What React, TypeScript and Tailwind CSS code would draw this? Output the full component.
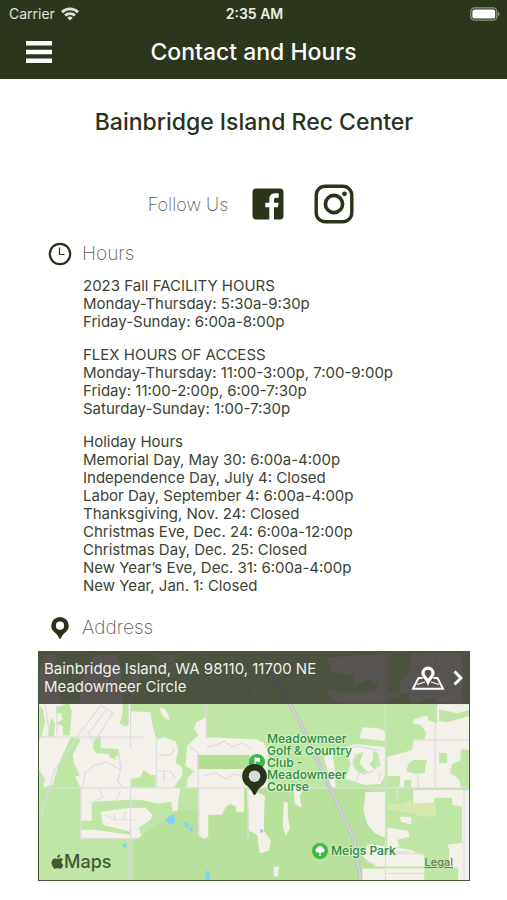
import React from 'react';

const schedule = [
    {
        title: '2023 Fall FACILITY HOURS',
        lines: ['Monday-Thursday: 5:30a-9:30p', 'Friday-Sunday: 6:00a-8:00p'],
    },
    {
        title: 'FLEX HOURS OF ACCESS',
        lines: [
            'Monday-Thursday: 11:00-3:00p, 7:00-9:00p',
            'Friday: 11:00-2:00p, 6:00-7:30p',
            'Saturday-Sunday: 1:00-7:30p',
        ],
    },
    {
        title: 'Holiday Hours',
        lines: [
            'Memorial Day, May 30: 6:00a-4:00p',
            'Independence Day, July 4: Closed',
            'Labor Day, September 4: 6:00a-4:00p',
            'Thanksgiving, Nov. 24: Closed',
            'Christmas Eve, Dec. 24: 6:00a-12:00p',
            'Christmas Day, Dec. 25: Closed',
            'New Year’s Eve, Dec. 31: 6:00a-4:00p',
            'New Year, Jan. 1: Closed',
        ],
    },
];

const WifiIcon = () => (
    <svg viewBox="0 0 18 14" className="h-[14px] w-[18px]" fill="none" stroke="currentColor" strokeWidth="2.8">
        <path d="M1 5.2a11.4 11.4 0 0 1 16 0" />
        <path d="M4 8.6a7.2 7.2 0 0 1 10 0" />
        <path d="M9 13.6 6.2 10.8a4 4 0 0 1 5.6 0Z" fill="currentColor" stroke="none" />
    </svg>
);

const BatteryIcon = () => (
    <svg viewBox="0 0 30 14" className="h-[14px] w-[30px]">
        <rect x="0.8" y="0.8" width="26" height="12.4" rx="3.6" fill="none" stroke="#8d9385" strokeWidth="1.3" />
        <rect x="2.4" y="2.4" width="22.8" height="9.2" rx="2.2" fill="#fff" />
        <path d="M28 4.8c2 .8 2 3.6 0 4.4Z" fill="#8d9385" />
    </svg>
);

const FacebookIcon = () => (
    <svg viewBox="0 0 32 32" className="h-8 w-8" fill="currentColor">
        <path d="M4.5.5h23a4 4 0 0 1 4 4v23a4 4 0 0 1-4 4H22V19.2h4l.6-4.5H22v-2.9c0-1.4.6-2.1 2.2-2.1h2.5V5.5c-.8-.1-2-.2-3.2-.2-4 0-6.2 2.1-6.2 6v3.4h-4v4.5h4v12.3H4.5a4 4 0 0 1-4-4v-23a4 4 0 0 1 4-4Z" />
    </svg>
);

const InstagramIcon = () => (
    <svg viewBox="0 0 40 40" className="h-10 w-10" fill="none" stroke="currentColor">
        <rect x="2.2" y="2.2" width="35.6" height="35.6" rx="9" strokeWidth="3.4" />
        <circle cx="20" cy="20" r="8.6" strokeWidth="3.6" />
        <circle cx="30.5" cy="9.8" r="2.4" fill="currentColor" stroke="none" />
    </svg>
);

const ClockIcon = () => (
    <svg viewBox="0 0 24 24" className="h-6 w-6" fill="none" stroke="currentColor">
        <circle cx="12" cy="12" r="10.2" strokeWidth="2.2" />
        <path d="M11.500 5.500V12.500h5" strokeWidth="1.2" />
    </svg>
);

const PinIcon = ({ className, hole = '#fff' }: { className: string; hole?: string }) => (
    <svg viewBox="0 0 24 30" className={className} fill="currentColor">
        <path d="M12 0a12 12 0 0 1 12 12c0 4-2.2 7.2-5.2 9.600-2.2 1.7-4 3.8-5.3 7.2-.6 1.500-2.400 1.500-3 0-1.300-3.400-3.100-5.500-5.300-7.200C2.200 19.200 0 16 0 12A12 12 0 0 1 12 0Z" />
        <circle cx="12" cy="11.8" r="5.6" fill={hole} />
    </svg>
);

const MapPinIcon = () => (
    <svg viewBox="0 0 34 24" className="h-6 w-[34px]" fill="none" stroke="currentColor">
        <path d="M11.5 12H7.5L2 22.8h30L26.5 12h-4" strokeWidth="2" />
        <path d="m6 18.5 8-2.5M20 16l8 2.5" strokeWidth="1.2" />
        <path d="M17 2.2a5 5 0 0 1 5 5c0 3.6-3.3 4.6-5 8.6-1.7-4-5-5-5-8.6a5 5 0 0 1 5-5Z" strokeWidth="3.2" />
    </svg>
);

const AppleIcon = () => (
    <svg viewBox="0 0 14 17" className="h-[16px] w-[13px]" fill="currentColor">
        <path d="M9.9.3c.1 1.1-.3 2.1-.9 2.8-.6.7-1.5 1.2-2.4 1.1-.1-1 .4-2.1.9-2.7C8.2.8 9.1.4 9.9.3Z" />
        <path d="M13 5.8c-1.1.7-1.7 1.6-1.7 2.8 0 1.4.8 2.5 2 3-.5 1.5-1.9 4.1-3.5 4.1-1 0-1.4-.6-2.6-.6s-1.7.6-2.6.6C2.8 15.8.6 12.2.6 9.2c0-2.9 1.8-4.6 3.7-4.6 1.2 0 2.1.7 2.9.7.7 0 1.8-.8 3.2-.8 1 0 2 .5 2.6 1.3Z" />
    </svg>
);

const MapArtwork = () => (
    <svg viewBox="0 0 432 230" preserveAspectRatio="xMidYMid slice" className="absolute inset-0 h-full w-full">
        <rect width="432" height="230" fill="#bfe6a4" />
        <path d="M140 160H172V138H330L348 187V230H96V190Z" fill="#b8e29c" />

        {/* built-up areas */}
        <g fill="#f3f0ea">
            <path d="M0 20 6 4 16 2 22 52H40L46 20 56 4H78L84 20 104 18 96 40 92 53V60L112 61 114 74 118 88 125 86 137 90 140 99 137 111 144 117 144 124 135 137H142L140 150 139 160H134L133 151 119 153 102 149 92 149 53 151V170H42V137L36 126 41 124 35 112 34 104 42 88 32 86 20 112 16 126 14 134 0 137Z" />
            <path d="M62 161 92 157 107 157 114 164 112 169 100 177 103 185 99 188H42V179H55L92 184V181L64 174Z" />
            <path d="M168 66 158 71 156 77 160 84 149 95 147 115 156 120 149 127 149 137H230V100L226 92 218 88 168 86Z" />
            <path d="M122 56c7 2 8 7 9 13-6-2-10-7-9-13Z" />
            <path d="M161 137H206V161H198V156L192 153 187 157 184 164H170V186L166 188 161 185Z" />
            <path d="M209 138 227 145 226 165 226 180 233 190 231 200 222 203 219 184 211 180Z" />
            <path d="M246 151 250 152 250 165 252 178 248 185 245 176Z M256 138H265L262 146 264 157 257 153Z M236 216H241L240 226H236Z" />
            <path d="M325 76 341 77 348 80V90L322 87Z" />
            <path d="M308 96 318 93 348 96V124L343 133 328 134 308 128 313 114Z" />
            <path d="M286 106 295 103 297 118 298 136H293L290 120Z" />
            <path d="M328 141H348V187L338 183 330 174 326 160Z" />
            <path d="M350 106 375 99 376 89 387 88 389 82 384 74 375 72 377 68 390 64 391 69 400 72V53H432V59L420 62 402 58V70L410 71 432 65V137H350Z" />
            <path d="M376 139H432V230H421V217H412V198L410 194 425 192V156L415 154V147H397V152L376 153Z" />
            <path d="M362 166H374V174L364 171Z M350 177 371 180 372 186 360 189 362 196 350 197Z" />
            <path d="M330 193 350 196 372 199 387 205V216H338L332 211 326 207Z M325 218H387V230H325Z" />
            <path d="M290 6 350 2V46H362V32L372 20 374 2H425V52H404L392 46 382 52H372V42H350V52H300L288 40 316 36V24L294 20Z" />
            <path d="M116 2H140L134 16 124 20Z M214 36H218V42H214Z" opacity=".5" />
        </g>

        {/* greenery inside the built-up areas */}
        <g fill="#bfe6a4">
            <path d="M0 54 4 58 6 70 3 84 0 90Z M0 119 6 128 4 137H0Z" />
            <path d="M17 56 30 52 33 60 31 84H24V75L17 72 24 68 22 62 17 62Z M12 66 16 72 15 85H9Z" />
            <path d="M83 20H94L90 54V74L86 75 81 72 84 62Z" />
            <path d="M56 87 62 85V97L80 98V104L76 106 79 109 72 107 70 103 57 102 54 97Z" />
            <path d="M92 128 102 126 105 119 112 124 117 124V136H92Z" />
            <path d="M376 109H390L388 114V122L378 123 369 120 371 113Z M350 125H363L362 136H350Z M367 129H374V138H367Z" />
            <path d="M402 102H410V112H402Z M424 98 432 99V138L424 136 422 128 413 122 415 113 423 110Z" />
            <path d="M300 34 316 34 332 28 342 33 336 40 300 42Z M22 8 40 4 34 26 24 34Z" />
            <path d="M320 103 326 101 322 112 327 118 331 121 326 124 318 119 315 111Z M336 99 341 103 343 115 337 118 332 113 335 110Z" />
        </g>
        <path d="M159 104H212V118H159Z" fill="#b0df94" />
        <path d="M350 153H366L374 149V153H399V166H382L376 162 350 159Z" fill="#d7e8ab" />

        {/* minor roads */}
        <g fill="none" stroke="#dbdcdf" strokeWidth="1.2">
            <path d="M0 137H432M0 86H106M92 28V98M92 137V230M118 88V136M42 138V188H100M160 136V186M168 0V88M210 143V190" />
            <path d="M348 0V230M398 0V139M376 89H432M427 139V230M360 138V150M348 203H386M348 223H387" />
            <path d="M39 84 62 54 74 62 56 90M50 82 54 92M50 82 68 58M6 52 10 78M18 54V84M40 84 16 118 2 166" />
            <path d="M44 136 46 122 56 114 68 111 82 119 79 130 85 137M82 118 80 100M60 138 64 146 54 152M82 140 78 148" />
            <path d="M66 164 76 169H98M76 170V163M86 169V161M120 104H132L136 98M120 120H132L137 127M126 120V130" />
            <path d="M168 96 178 94 186 90 194 96 204 92 214 98M160 136V102L152 96M164 125 178 122 188 128 196 123 210 127 218 122" />
            <path d="M304 99 320 95 344 100M318 102C312 114 318 122 328 122S342 114 340 104M322 122 318 130M342 122V130M381 122V137" />
            <path d="M330 196 342 201H372M326 210 338 214" />
        </g>

        {/* highway */}
        <g fill="none" strokeLinejoin="round">
            <path d="M226 0 237 26 262 71 292 136 317 190 323 230" stroke="#bdbfc4" strokeWidth="3.6" />
            <path d="M226 0 237 26 262 71 292 136 317 190 323 230" stroke="#d3d4da" strokeWidth="2" />
        </g>

        {/* ponds */}
        <g fill="#7fd3f7">
            <path d="M133 164 136 165 137 172 131 174 127 169Z M146 171 150 172 151 176 147 177Z M151 176 155 177 154 181 151 180Z M84 193H88V197H84Z M168 220 171 221 172 229H167Z M222 178 226 180 223 183Z" />
        </g>
    </svg>
);

const SectionHeading = ({ icon, children }: { icon: React.ReactNode; children: React.ReactNode }) => (
    <div className="flex h-6 items-center gap-[10px] pl-[10px]">
        {icon}
        <h2 className="text-[19px] leading-6 font-extralight text-[#5c5e59]">{children}</h2>
    </div>
);

const App: React.FC = () => {
    return (
        <div className="min-h-screen bg-white font-['Inter',sans-serif] text-[#28331a]">
            <header className="h-[79px] bg-[#2b361c] text-white">
                <div className="grid h-[27px] grid-cols-3 items-center pr-[7px] pl-[9px]">
                    <div className="flex items-center gap-[6px] text-[14px] text-[#dfe2db]">
                        <span>Carrier</span>
                        <WifiIcon />
                    </div>
                    <span className="text-center text-[14px] font-semibold text-[#eceee9]">2:35 AM</span>
                    <div className="flex justify-end">
                        <BatteryIcon />
                    </div>
                </div>
                <div className="grid h-[50px] grid-cols-[52px_1fr_52px] items-center">
                    <button type="button" aria-label="Menu" className="flex justify-end">
                        <svg viewBox="0 0 26 22" className="h-[22px] w-[26px]" fill="currentColor">
                            <path d="M0 0h26v4.4H0Z M0 8.8h26v4.4H0Z M0 17.6h26v4.4H0Z" />
                        </svg>
                    </button>
                    <h1 className="text-center text-[23px] leading-8 font-medium">Contact and Hours</h1>
                </div>
            </header>

            <main className="pt-[27px] pr-[37px] pl-[38px]">
                <p className="text-center text-[23px] leading-8 font-medium">Bainbridge Island Rec Center</p>

                <div className="mt-[46px] flex items-center justify-center pr-[6px]">
                    <span className="mr-6 text-[18px] font-extralight text-[#5c5e59]">Follow Us</span>
                    <a href="#facebook" aria-label="Facebook" className="mr-[30px]">
                        <FacebookIcon />
                    </a>
                    <a href="#instagram" aria-label="Instagram">
                        <InstagramIcon />
                    </a>
                </div>

                <section className="mt-[18px]">
                    <SectionHeading icon={<ClockIcon />}>Hours</SectionHeading>
                    <div className="mt-[11px] flex flex-col gap-[15px] pl-[45px] text-[15px] leading-[18px] text-[#3b4332]">
                        {schedule.map((group) => (
                            <div key={group.title}>
                                <h3>{group.title}</h3>
                                {group.lines.map((line) => (
                                    <p key={line}>{line}</p>
                                ))}
                            </div>
                        ))}
                    </div>
                </section>

                <section className="mt-[21px]">
                    <SectionHeading icon={<PinIcon className="h-[22px] w-6" />}>Address</SectionHeading>
                    <div className="relative mt-[11px] h-[230px] overflow-hidden border border-[#43573a]">
                        <MapArtwork />
                        <a
                            href="#directions"
                            className="relative flex h-[52px] items-center bg-[#24201f]/75 pr-[6px] pl-[5px] text-white"
                        >
                            <span className="flex-1 pr-20 text-[15px] leading-[18px] text-[#eef0ec]">
                                Bainbridge Island, WA 98110, 11700 NE Meadowmeer Circle
                            </span>
                            <MapPinIcon />
                            <svg
                                viewBox="0 0 10 16"
                                className="ml-2 h-4 w-[10px]"
                                fill="none"
                                stroke="currentColor"
                                strokeWidth="3"
                            >
                                <path d="m1.5 1.5 6.5 6.5-6.5 6.5" />
                            </svg>
                        </a>

                        <svg viewBox="0 0 16 16" className="absolute top-[102px] left-[210px] h-4 w-4">
                            <circle cx="8" cy="8" r="8" fill="#3fb747" />
                            <path d="M6 3.5v9" stroke="#fff" strokeWidth="1.2" />
                            <path d="M6 3.5c2 1 3.5-.5 5 .5v4c-1.5-1-3 .5-5-.5Z" fill="#fff" />
                        </svg>
                        <p className="absolute top-[81px] left-[228px] w-[96px] text-[12px] leading-[12px] font-semibold text-[#32963c] [text-shadow:0_0_2px_#fff,0_0_2px_#fff]">
                            Meadowmeer Golf &amp; Country Club - Meadowmeer Course
                        </p>
                        <PinIcon className="absolute top-[112px] left-[203px] h-[31px] w-[25px]" hole="#d9d9d6" />

                        <div className="absolute top-[191px] left-[273px] flex items-center gap-[3px]">
                            <svg viewBox="0 0 16 16" className="h-4 w-4">
                                <circle cx="8" cy="8" r="8" fill="#3fb747" />
                                <path
                                    d="M8 3a3 3 0 0 1 3 2 2.3 2.3 0 0 1-.6 4.5H8.7V13H7.3V9.5H5.6A2.3 2.3 0 0 1 5 5a3 3 0 0 1 3-2Z"
                                    fill="#fff"
                                />
                            </svg>
                            <span className="text-[12px] leading-4 font-semibold text-[#32963c] [text-shadow:0_0_2px_#fff,0_0_2px_#fff]">
                                Meigs Park
                            </span>
                        </div>

                        <div className="absolute bottom-[6px] left-3 flex items-center text-[#44583a]">
                            <AppleIcon />
                            <span className="text-[18px] leading-6 font-medium">Maps</span>
                        </div>
                        <a
                            href="#legal"
                            className="absolute right-4 bottom-[10px] text-[11px] leading-4 font-medium text-[#6d7a65] underline"
                        >
                            Legal
                        </a>
                    </div>
                </section>
            </main>
        </div>
    );
};

export default App;
